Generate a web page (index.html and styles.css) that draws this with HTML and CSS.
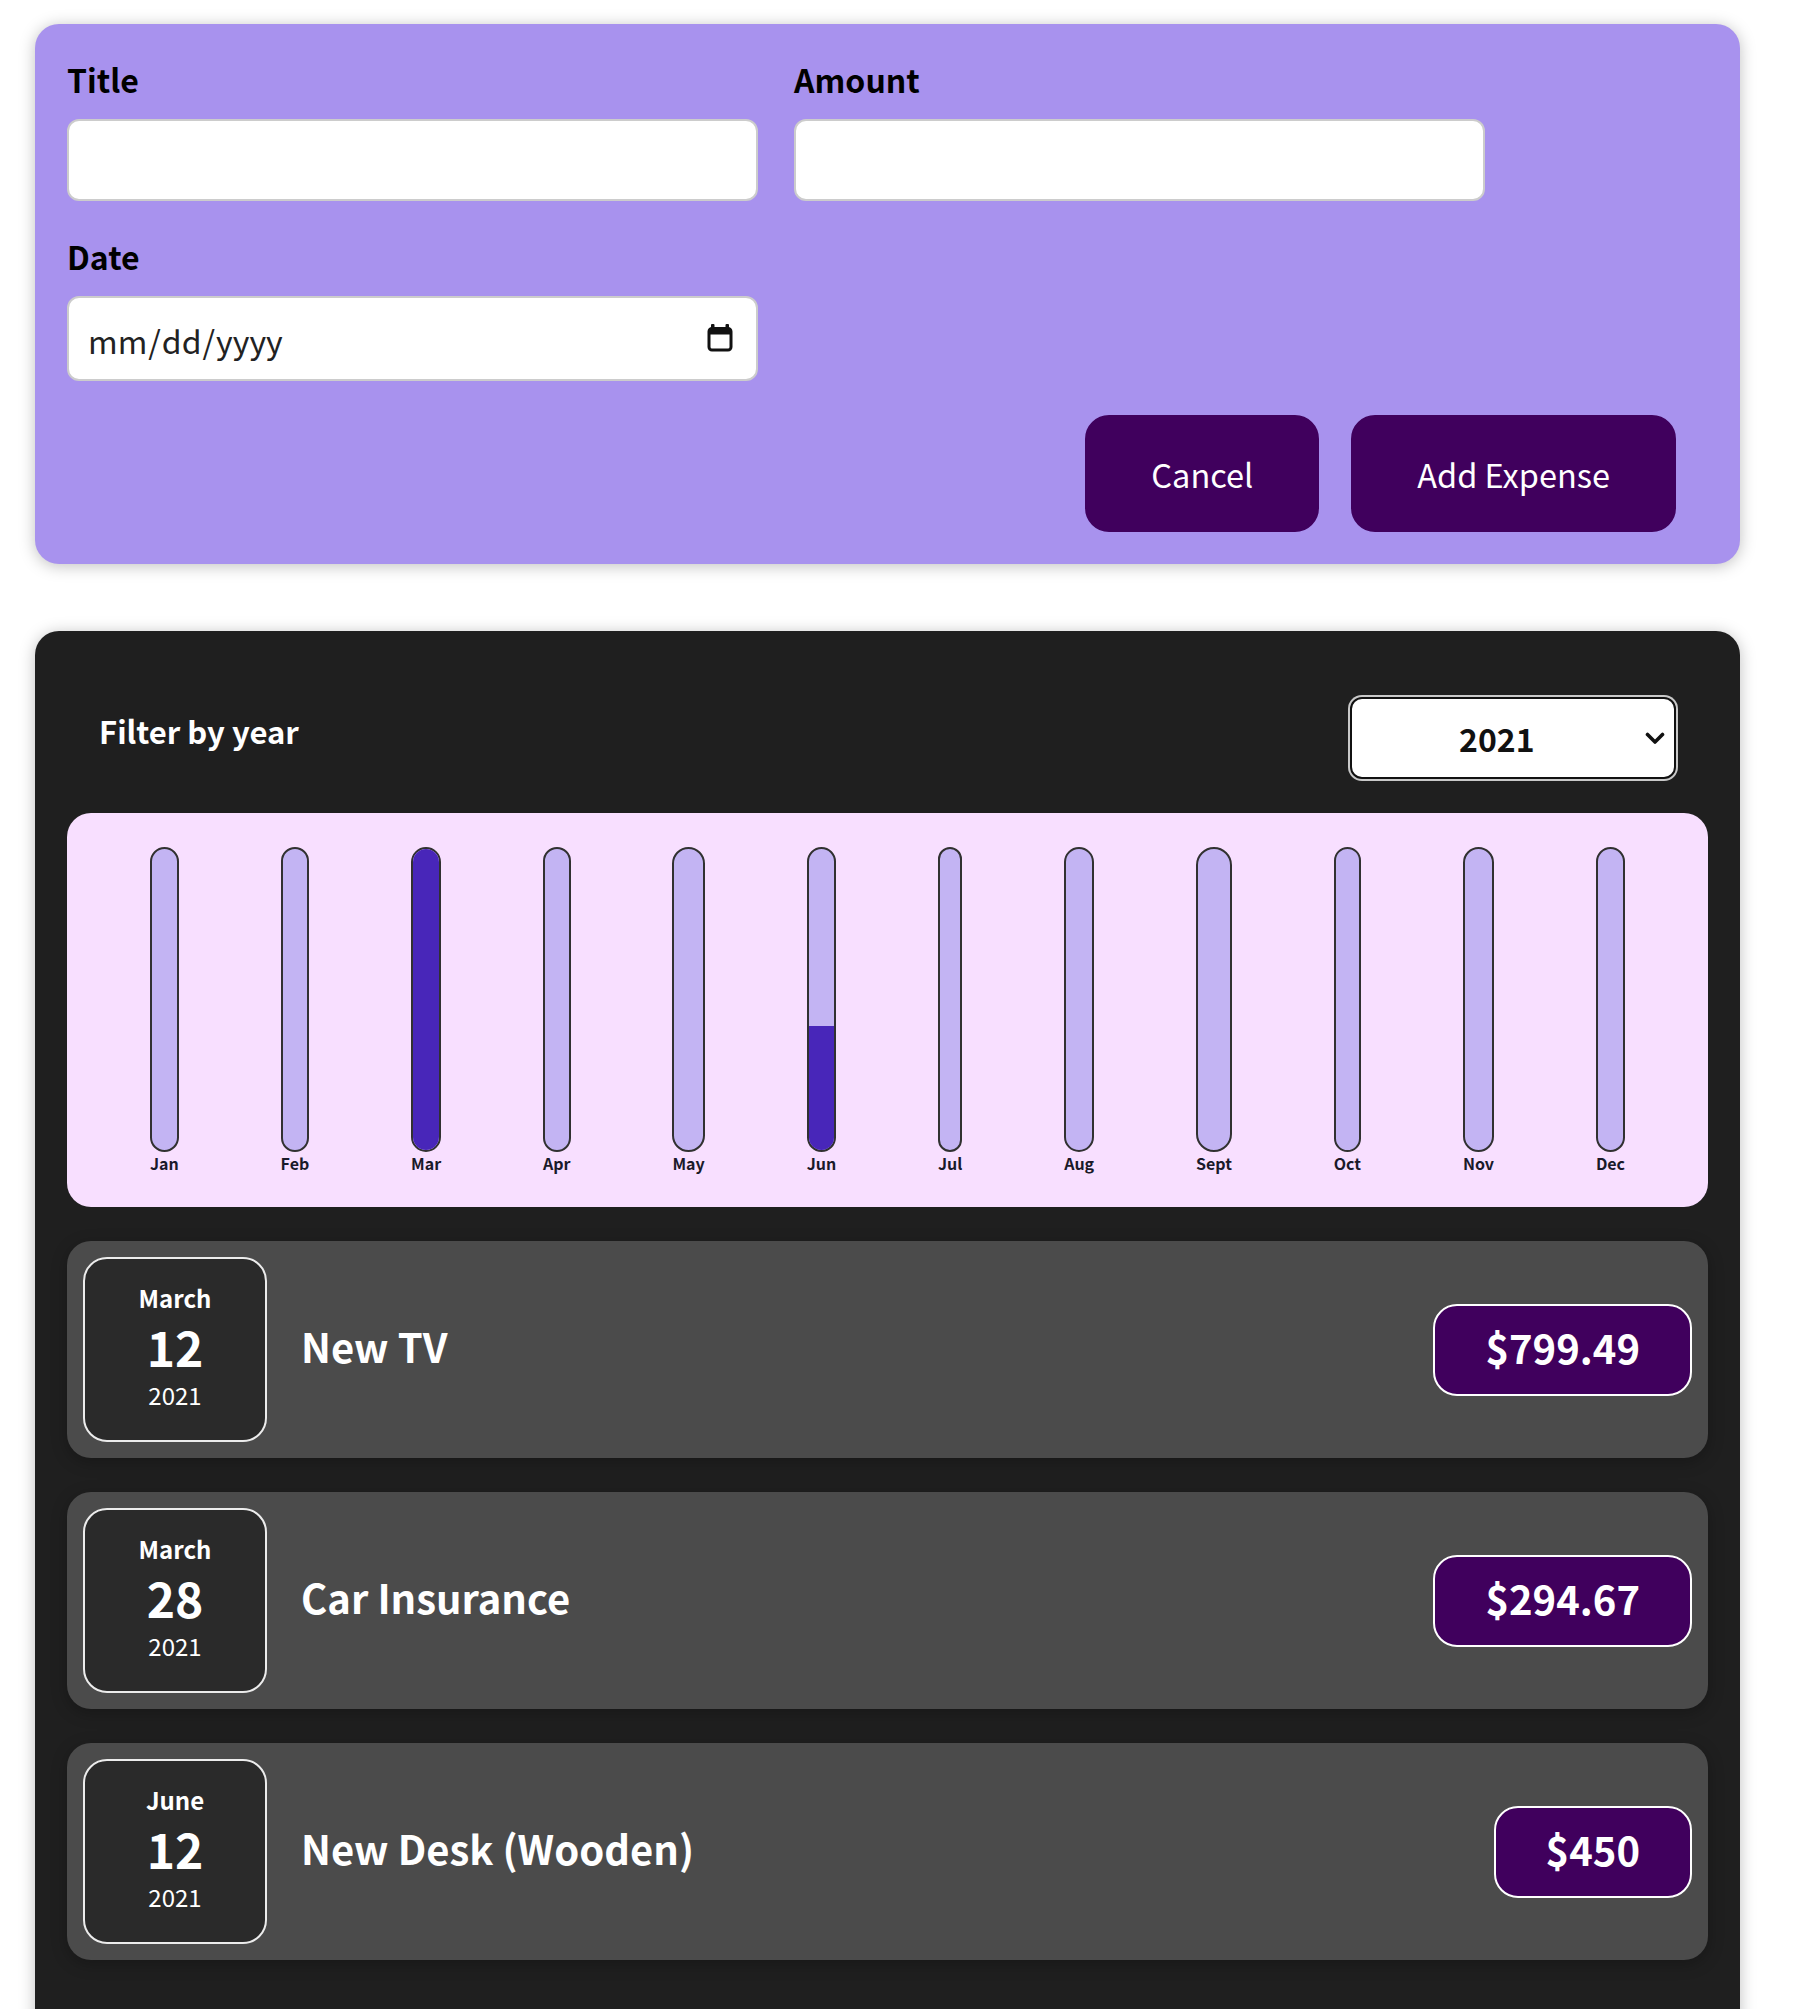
FILE: index.html
```html
<!DOCTYPE html>
<html lang="en">
<head>
<meta charset="utf-8">
<title>Expense Tracker</title>
<link rel="stylesheet" href="styles.css">
</head>
<body>
<div class="page">
  <section class="new-expense">
    <form>
      <div class="controls">
        <div class="control">
          <label for="title">Title</label>
          <input id="title" type="text">
        </div>
        <div class="control">
          <label for="amount">Amount</label>
          <input id="amount" type="number">
        </div>
        <div class="control">
          <label for="date">Date</label>
          <div class="date-wrap">
            <input id="date" class="date-input" type="date">
            <svg class="cal-icon" width="26" height="28" viewBox="0 0 26 28" aria-hidden="true">
              <rect x="4" y="0" width="3.5" height="6" rx="1" fill="#111"/>
              <rect x="18.5" y="0" width="3.5" height="6" rx="1" fill="#111"/>
              <rect x="2" y="4.5" width="22" height="21.5" rx="3" fill="none" stroke="#111" stroke-width="3"/>
              <rect x="2" y="4.5" width="22" height="6" fill="#111"/>
            </svg>
          </div>
        </div>
      </div>
      <div class="actions">
        <button type="button" class="btn">Cancel</button>
        <button type="submit" class="btn">Add Expense</button>
      </div>
    </form>
  </section>

  <section class="expenses">
    <div class="filter">
      <div class="filter-control">
        <label for="year">Filter by year</label>
        <div class="select-wrap">
          <select id="year" class="year-select">
            <option>2022</option>
            <option selected>2021</option>
            <option>2020</option>
            <option>2019</option>
          </select>
          <svg class="chevron" width="20" height="13" viewBox="0 0 20 13" aria-hidden="true">
            <polyline points="2.5,2.5 10,10 17.5,2.5" fill="none" stroke="#111" stroke-width="3.6" stroke-linecap="round" stroke-linejoin="round"/>
          </svg>
        </div>
      </div>
    </div>

    <div class="chart">
      <div class="chart-bar"><div class="bar-inner"><div class="bar-fill" style="height:0%"></div></div><div class="bar-label">Jan</div></div>
      <div class="chart-bar"><div class="bar-inner"><div class="bar-fill" style="height:0%"></div></div><div class="bar-label">Feb</div></div>
      <div class="chart-bar"><div class="bar-inner"><div class="bar-fill" style="height:100%"></div></div><div class="bar-label">Mar</div></div>
      <div class="chart-bar"><div class="bar-inner"><div class="bar-fill" style="height:0%"></div></div><div class="bar-label">Apr</div></div>
      <div class="chart-bar"><div class="bar-inner"><div class="bar-fill" style="height:0%"></div></div><div class="bar-label">May</div></div>
      <div class="chart-bar"><div class="bar-inner"><div class="bar-fill" style="height:41.1%"></div></div><div class="bar-label">Jun</div></div>
      <div class="chart-bar"><div class="bar-inner"><div class="bar-fill" style="height:0%"></div></div><div class="bar-label">Jul</div></div>
      <div class="chart-bar"><div class="bar-inner"><div class="bar-fill" style="height:0%"></div></div><div class="bar-label">Aug</div></div>
      <div class="chart-bar"><div class="bar-inner"><div class="bar-fill" style="height:0%"></div></div><div class="bar-label">Sept</div></div>
      <div class="chart-bar"><div class="bar-inner"><div class="bar-fill" style="height:0%"></div></div><div class="bar-label">Oct</div></div>
      <div class="chart-bar"><div class="bar-inner"><div class="bar-fill" style="height:0%"></div></div><div class="bar-label">Nov</div></div>
      <div class="chart-bar"><div class="bar-inner"><div class="bar-fill" style="height:0%"></div></div><div class="bar-label">Dec</div></div>
    </div>

    <ul class="expense-list">
      <li class="expense-item">
        <div class="expense-date">
          <div class="date-month">March</div>
          <div class="date-day">12</div>
          <div class="date-year">2021</div>
        </div>
        <h2 class="expense-title">New TV</h2>
        <div class="expense-price">$799.49</div>
      </li>
      <li class="expense-item">
        <div class="expense-date">
          <div class="date-month">March</div>
          <div class="date-day">28</div>
          <div class="date-year">2021</div>
        </div>
        <h2 class="expense-title">Car Insurance</h2>
        <div class="expense-price">$294.67</div>
      </li>
      <li class="expense-item">
        <div class="expense-date">
          <div class="date-month">June</div>
          <div class="date-day">12</div>
          <div class="date-year">2021</div>
        </div>
        <h2 class="expense-title">New Desk (Wooden)</h2>
        <div class="expense-price">$450</div>
      </li>
    </ul>
  </section>
</div>
</body>
</html>
```

FILE: styles.css
```css
* {
  box-sizing: border-box;
}

html {
  font-family: "Noto Sans CJK JP", "Noto Sans", sans-serif;
}

body {
  margin: 0;
  background: #ffffff;
}

.page {
  width: 1740px;
  padding: 24px 0 0 35px;
}

/* ---------- New expense form ---------- */
.new-expense {
  background-color: #a892ee;
  padding: 32px;
  border-radius: 24px;
  box-shadow: 0 2px 16px rgba(0, 0, 0, 0.25);
}

.controls {
  display: flex;
  flex-wrap: wrap;
  column-gap: 36px;
  row-gap: 32px;
  margin-bottom: 34px;
}

.control label {
  display: block;
  font-size: 32px;
  font-weight: 700;
  color: #000;
  margin-bottom: 17px;
}

.control input {
  display: block;
  font: inherit;
  font-size: 32px;
  width: 691px;
  height: 82px;
  padding: 0 16px;
  border: 2px solid #cccccc;
  border-radius: 12px;
  background: #fff;
  color: #111;
}

.date-wrap {
  position: relative;
  width: 691px;
}

.control .date-input {
  height: 85px;
  padding-left: 18px;
  padding-top: 2px;
  color: #222;
}

.date-input::-webkit-calendar-picker-indicator {
  opacity: 0;
}

.cal-icon {
  position: absolute;
  right: 25px;
  top: 28px;
}

.actions {
  display: flex;
  justify-content: flex-end;
  gap: 32px;
  padding-right: 32px;
}

.btn {
  font: inherit;
  font-size: 32.5px;
  height: 117px;
  padding: 0 64px;
  border: 2px solid #40005d;
  background-color: #40005d;
  color: #ffffff;
  border-radius: 24px;
  cursor: pointer;
}

/* ---------- Expenses ---------- */
.expenses {
  margin-top: 67px;
  padding: 32px 32px 96px;
  background-color: #1f1f1f;
  border-radius: 24px;
  box-shadow: 0 2px 16px rgba(0, 0, 0, 0.25);
}

.filter {
  color: #ffffff;
  padding: 0 32px;
}

.filter-control {
  display: flex;
  align-items: center;
  justify-content: space-between;
  margin: 32px 0;
}

.filter-control label {
  font-size: 31px;
  font-weight: 700;
  margin-bottom: 16px;
}

.select-wrap {
  position: relative;
  margin: 2px 0;
}

.year-select {
  display: block;
  appearance: none;
  -webkit-appearance: none;
  font: inherit;
  font-size: 32px;
  font-weight: 700;
  width: 326px;
  height: 82px;
  padding: 0 0 0 107px;
  border: 2px solid #111;
  border-radius: 12px;
  background: #ffffff;
  color: #111;
  box-shadow: 0 0 0 2px #c9c9c9;
}

.chevron {
  position: absolute;
  right: 11px;
  top: 35px;
  pointer-events: none;
}

/* ---------- Chart ---------- */
.chart {
  display: flex;
  justify-content: space-around;
  height: 394px;
  padding: 34px 32px 32px;
  background-color: #f8dfff;
  border-radius: 24px;
}

.chart-bar {
  display: flex;
  flex-direction: column;
  align-items: center;
  height: 100%;
}

.bar-inner {
  flex: 1;
  width: 100%;
  display: flex;
  flex-direction: column;
  justify-content: flex-end;
  border: 2px solid #313131;
  border-radius: 24px;
  background-color: #c3b4f3;
  overflow: hidden;
}

.bar-fill {
  width: 100%;
  background-color: #4826b9;
}

.bar-label {
  font-size: 16px;
  font-weight: 700;
  line-height: 23px;
  color: #1a1a2a;
  text-align: center;
}

/* ---------- Expense items ---------- */
.expense-list {
  list-style: none;
  margin: 34px 0 0;
  padding: 0;
  display: flex;
  flex-direction: column;
  gap: 34px;
}

.expense-item {
  display: flex;
  align-items: center;
  padding: 16px;
  background-color: #4b4b4b;
  border-radius: 24px;
  box-shadow: 0 4px 16px rgba(0, 0, 0, 0.25);
}

.expense-date {
  display: flex;
  flex-direction: column;
  align-items: center;
  justify-content: center;
  flex: none;
  width: 184px;
  height: 185px;
  padding-bottom: 8px;
  border: 2px solid #ececec;
  border-radius: 24px;
  background-color: #2a2a2a;
  color: #ffffff;
}

.date-month {
  font-size: 24px;
  font-weight: 700;
  line-height: 35px;
}

.date-day {
  font-size: 48px;
  font-weight: 700;
  line-height: 62px;
}

.date-year {
  font-size: 24px;
  line-height: 35px;
}

.expense-title {
  flex: 1;
  margin: 0 34px;
  padding-bottom: 8px;
  font-size: 40px;
  font-weight: 700;
  color: #ffffff;
}

.expense-price {
  font-size: 40px;
  font-weight: 700;
  color: #ffffff;
  background-color: #40005d;
  border: 2px solid #ffffff;
  border-radius: 24px;
  padding: 12px 50px 18px;
}
```
